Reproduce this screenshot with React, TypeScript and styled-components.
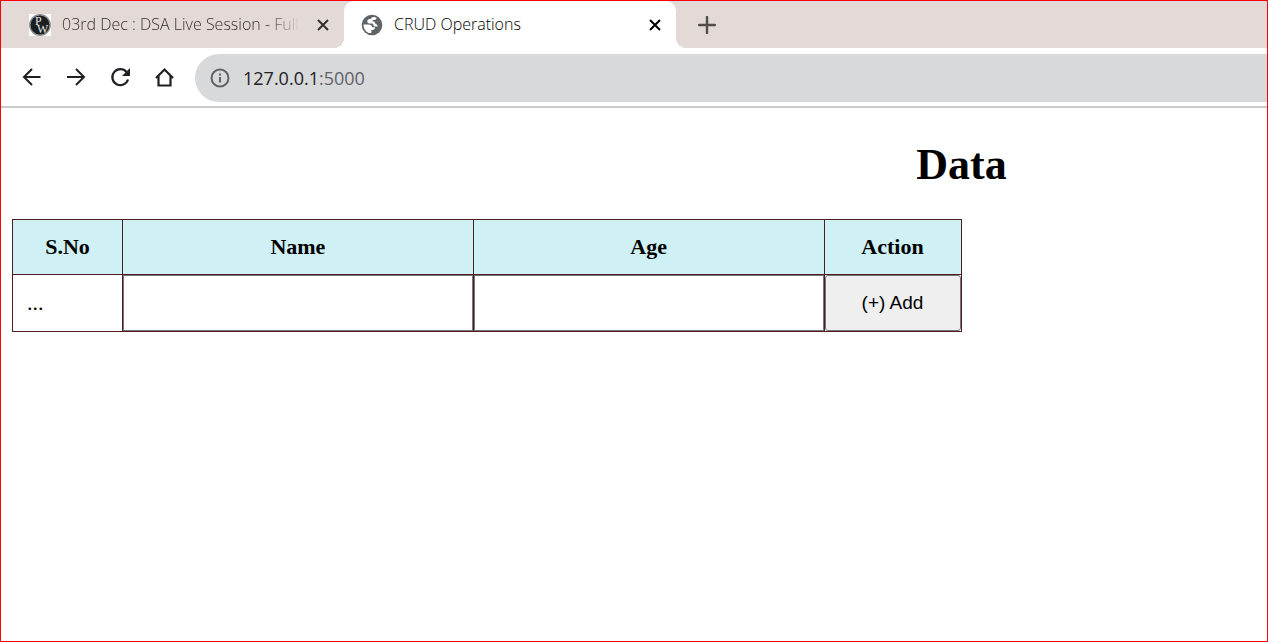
import React from 'react';
import styled, { createGlobalStyle } from 'styled-components';

const GlobalStyle = createGlobalStyle`
  * { box-sizing: border-box; }
  body { margin: 0; background: #fff; color: #000; }
`;

const Frame = styled.div`
  min-height: 100vh;
  border: 1px solid #f00;
  overflow: hidden;
  font-family: 'Open Sans', 'Noto Sans', sans-serif;
`;

const TabStrip = styled.div`
  display: flex;
  height: 47px;
  background: #e3dad7;
`;

const Tab = styled.div<{ $active?: boolean }>`
  position: relative;
  display: flex;
  align-items: center;
  flex: none;
  width: ${p => (p.$active ? 332 : 343)}px;
  padding: 0 11px 0 ${p => (p.$active ? 17 : 28)}px;
  border-radius: 10px 10px 0 0;
  background: ${p => (p.$active ? '#fff' : 'transparent')};
  color: ${p => (p.$active ? '#000' : '#33302f')};

  &::before, &::after {
    content: '';
    display: ${p => (p.$active ? 'block' : 'none')};
    position: absolute;
    bottom: 0;
    width: 10px;
    height: 10px;
  }
  &::before {
    left: -10px;
    background: radial-gradient(circle at 0 0, transparent 10px, #fff 10px);
  }
  &::after {
    right: -10px;
    background: radial-gradient(circle at 100% 0, transparent 10px, #fff 10px);
  }
`;

const TabTitle = styled.span<{ $fade?: boolean }>`
  flex: 1;
  min-width: 0;
  margin: 0 12px 0 11px;
  padding-bottom: 2px;
  overflow: hidden;
  white-space: nowrap;
  font-size: 16px;
  font-weight: 300;
  line-height: 24px;
  mask-image: ${p => (p.$fade ? 'linear-gradient(to right, #000 86%, transparent)' : 'none')};
`;

const IconButton = styled.button`
  display: flex;
  align-items: center;
  justify-content: center;
  flex: none;
  padding: 0;
  border: 0;
  background: none;
  color: inherit;
`;

const CloseButton = styled(IconButton)`
  width: 20px;
  height: 20px;
`;

const NewTabButton = styled(IconButton)`
  width: 62px;
  color: #504d4c;
`;

const Toolbar = styled.div`
  display: flex;
  align-items: center;
  padding: 6px 0 4px 19px;
  border-bottom: 2px solid #cbcbcb;
  color: #1f2023;
`;

const NavButtons = styled.div`
  display: flex;
  gap: 20px;
  margin-right: 19px;
  padding-bottom: 2px;

  button { width: 24px; height: 24px; }
`;

const AddressBar = styled.div`
  display: flex;
  align-items: center;
  flex: 1;
  height: 48px;
  padding-left: 15px;
  border-radius: 24px 0 0 24px;
  background: #d8d9db;
  color: #5f6368;
`;

const Address = styled.a`
  margin-left: 13px;
  color: #5f6368;
  font-size: 18px;
  line-height: 24px;
  text-decoration: none;

  span { color: #1f2023; }
`;

/* The document is wider than the window and runs off its right edge. */
const Document = styled.main`
  width: 150%;
  margin-left: 11px;
  font-family: 'Liberation Serif', serif;
`;

const Title = styled.h1`
  margin: 0;
  padding: 30px 0 28px;
  font-size: 44px;
  line-height: 53px;
  text-align: center;
`;

const DataTable = styled.table`
  width: 50%;
  table-layout: fixed;
  border-collapse: collapse;
  font-size: 22px;
`;

const Column = styled.col<{ $width?: number }>`
  width: ${p => (p.$width ? `${p.$width}px` : 'auto')};
`;

const HeadCell = styled.th`
  height: 55px;
  padding: 0;
  border: 1px solid #4f1c20;
  background: #cff0f5;
  line-height: 26px;
`;

const Cell = styled.td<{ $flush?: boolean }>`
  height: 57px;
  padding: ${p => (p.$flush ? '0' : '0 14px')};
  border: 1px solid #4f1c20;
`;

const Field = styled.input`
  display: block;
  width: 100%;
  height: 56px;
  padding: 0 14px;
  border: 1px solid #767676;
  background: #fff;
  font: 18px 'Liberation Sans', sans-serif;
`;

const AddButton = styled.button`
  display: block;
  width: 100%;
  height: 56px;
  padding: 0;
  border: 1px solid #767676;
  border-radius: 3px;
  background: #efefef;
  color: #000;
  font: 19px 'Liberation Sans', sans-serif;
`;

const CloseIcon = () => (
  <svg width="12" height="12" viewBox="0 0 12 12" fill="none" stroke="currentColor" strokeWidth="2">
    <path d="M1 1l10 10M11 1L1 11" />
  </svg>
);

const PlusIcon = () => (
  <svg width="18" height="18" viewBox="0 0 18 18" fill="none" stroke="currentColor" strokeWidth="2.4">
    <path d="M9 1v16M1 9h16" strokeLinecap="round" />
  </svg>
);

const PwLogo = () => (
  <svg width="22" height="22" viewBox="0 0 22 22">
    <rect width="22" height="22" fill="#fff" />
    <circle cx="11" cy="11" r="10.2" fill="#1b1f22" stroke="#8d9192" strokeWidth="1.4" />
    <text fill="#e4e6e6" fontFamily="Liberation Serif, serif" fontSize="12">
      <tspan x="6" y="11">P</tspan>
      <tspan x="8" y="19">W</tspan>
    </text>
  </svg>
);

const GlobeIcon = () => (
  <svg width="22" height="22" viewBox="0 0 22 22">
    <circle cx="11" cy="11" r="10.3" fill="#5f6368" />
    <path
      d="M13.500 3c-2.500-.3-3.200.7-3.300 1.800-2.600 0-4 .9-3.900 2.600.1 1.400 1 2 2.500 2h2.200c.9 0 1.300.5 1.300 1.300 0 1.200.8 1.800 2.100 1.800h2.200c0-1.500-.8-2.400-2.200-2.500-.2-1.800-1-2.700-2.600-2.700h-.6c.2-.9.800-1.300 1.900-1.300 1.600 0 2.400-1 2.400-2.200z"
      fill="#fff"
    />
    <path
      d="M2.400 10.400h4.800c2.400 0 3.800 1 4 2.800h2.800c0 1.700-1 2.700-2.800 2.700h-.8v2.600c-.7.6-1.700.7-2.700.4C4.500 17.500 2.500 14.500 2.400 10.400z"
      fill="#fff"
    />
  </svg>
);

const BackIcon = () => (
  <svg width="24" height="24" viewBox="0 0 24 24" fill="none" stroke="currentColor" strokeWidth="2">
    <path d="M20.5 12H4M12 4l-8 8 8 8" />
  </svg>
);

const ForwardIcon = () => (
  <svg width="24" height="24" viewBox="0 0 24 24" fill="none" stroke="currentColor" strokeWidth="2">
    <path d="M3 12h17M12 4l8 8-8 8" />
  </svg>
);

const ReloadIcon = () => (
  <svg width="24" height="24" viewBox="0 0 24 24" fill="none" stroke="currentColor" strokeWidth="2.2">
    <path d="M20 14.5A8 8 0 1 1 18.5 7" />
    <path d="M22 3v8h-8z" fill="currentColor" stroke="none" />
  </svg>
);

const HomeIcon = () => (
  <svg width="24" height="24" viewBox="0 0 24 24" fill="none" stroke="currentColor" strokeWidth="2.2">
    <path d="M4 13l8.500-8.500L21 13M6.500 11v9.500h12V11" />
  </svg>
);

const InfoIcon = () => (
  <svg width="20" height="20" viewBox="0 0 20 20" fill="none" stroke="currentColor" strokeWidth="2">
    <circle cx="10" cy="10" r="8.5" />
    <path d="M10 9v5.500M10 5.500v2" />
  </svg>
);

export default function App() {
  return (
    <Frame>
      <GlobalStyle />
      <TabStrip>
        <Tab>
          <PwLogo />
          <TabTitle $fade>03rd Dec : DSA Live Session - Full Stack</TabTitle>
          <CloseButton aria-label="Close tab"><CloseIcon /></CloseButton>
        </Tab>
        <Tab $active>
          <GlobeIcon />
          <TabTitle>CRUD Operations</TabTitle>
          <CloseButton aria-label="Close tab"><CloseIcon /></CloseButton>
        </Tab>
        <NewTabButton aria-label="New tab"><PlusIcon /></NewTabButton>
      </TabStrip>
      <Toolbar>
        <NavButtons>
          <IconButton aria-label="Back"><BackIcon /></IconButton>
          <IconButton aria-label="Forward"><ForwardIcon /></IconButton>
          <IconButton aria-label="Reload"><ReloadIcon /></IconButton>
          <IconButton aria-label="Home"><HomeIcon /></IconButton>
        </NavButtons>
        <AddressBar>
          <InfoIcon />
          <Address href="#"><span>127.0.0.1</span>:5000</Address>
        </AddressBar>
      </Toolbar>
      <Document>
        <Title>Data</Title>
        <DataTable>
          <colgroup>
            <Column $width={110} />
            <Column />
            <Column />
            <Column $width={137} />
          </colgroup>
          <thead>
            <tr>
              <HeadCell>S.No</HeadCell>
              <HeadCell>Name</HeadCell>
              <HeadCell>Age</HeadCell>
              <HeadCell>Action</HeadCell>
            </tr>
          </thead>
          <tbody>
            <tr>
              <Cell>...</Cell>
              <Cell $flush><Field aria-label="Name" /></Cell>
              <Cell $flush><Field aria-label="Age" /></Cell>
              <Cell $flush><AddButton>(+) Add</AddButton></Cell>
            </tr>
          </tbody>
        </DataTable>
      </Document>
    </Frame>
  );
}
